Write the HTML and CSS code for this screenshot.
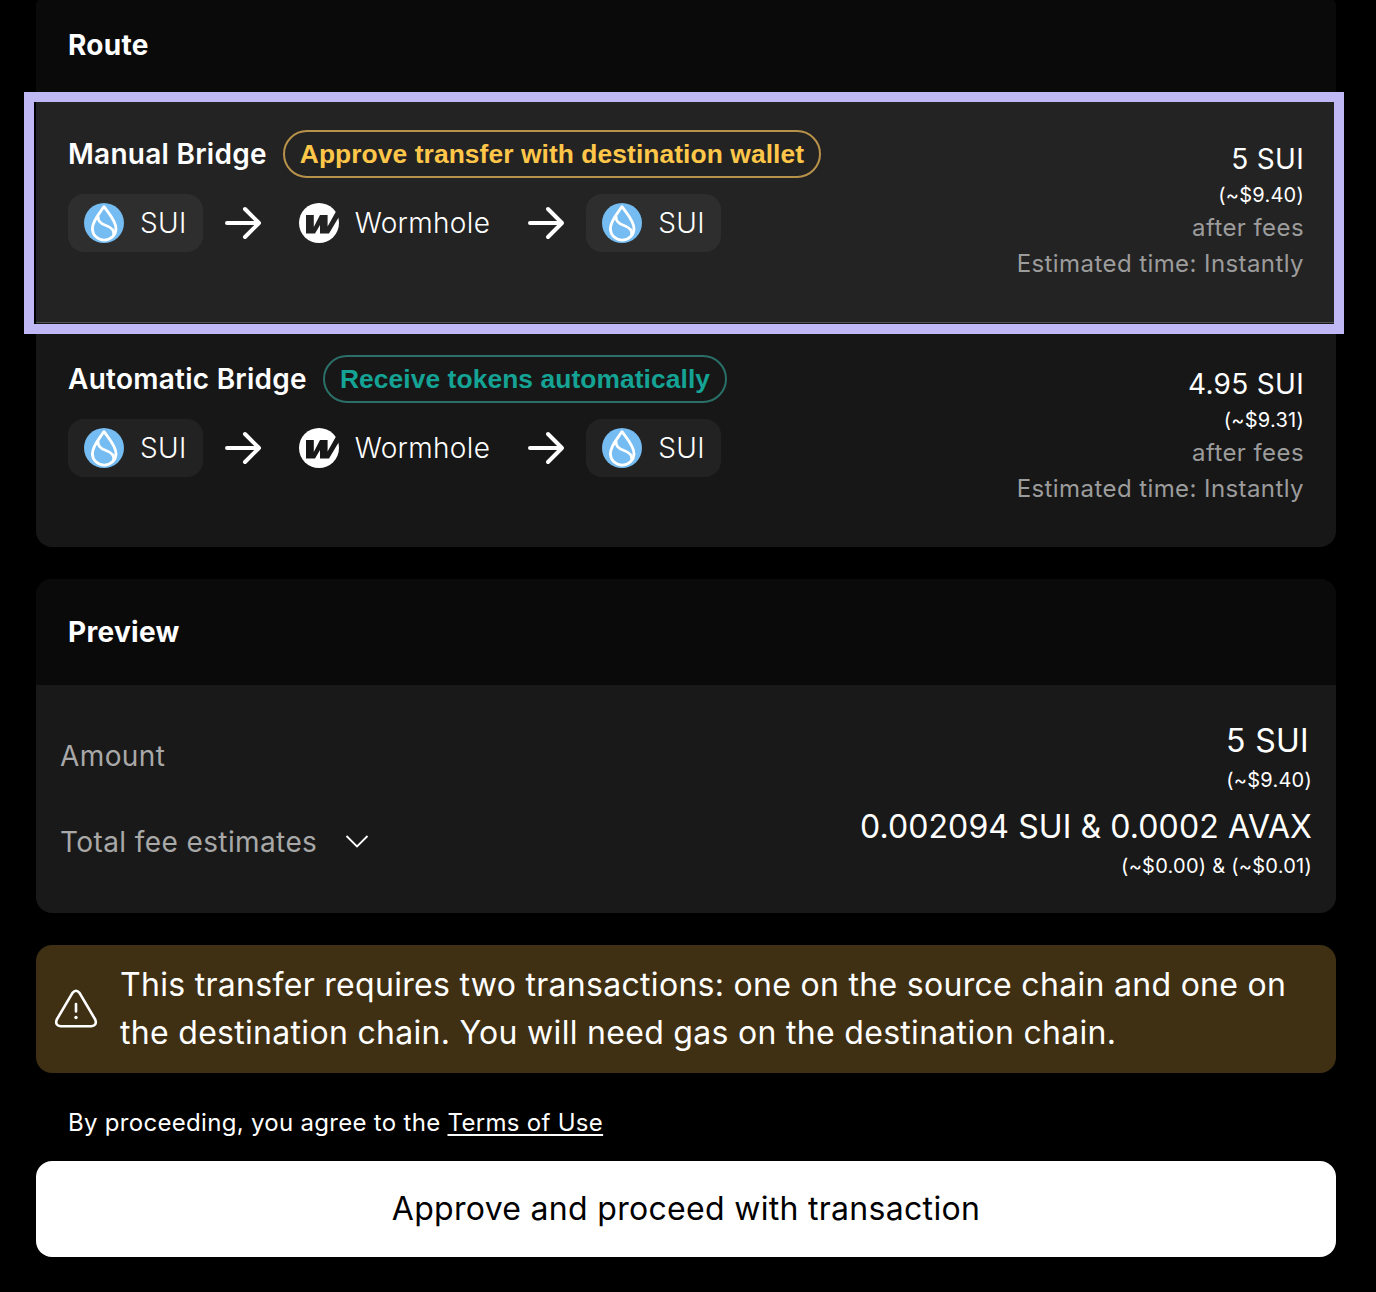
FILE: index.html
```html
<!DOCTYPE html>
<html lang="en">
<head>
<meta charset="utf-8">
<title>Bridge</title>
<link rel="stylesheet" href="styles.css">
</head>
<body>
<svg class="defs" aria-hidden="true">
  <symbol id="sui" viewBox="0 0 40 40">
    <circle cx="20" cy="20" r="20" fill="#74bcf1"/>
    <path d="M20 3.600C16.500 9.200 8.400 17.500 8.400 25.800A11.800 11.300 0 0 0 32 25.800C32 17.500 23.600 9.200 20 3.600Z" fill="none" stroke="#fff" stroke-width="2.800" stroke-linejoin="round"/>
    <path d="M14.300 13.200C13 18.500 17 20.800 22 22.500C27.500 24.500 30.800 27.500 29.600 32" fill="none" stroke="#fff" stroke-width="2.800"/>
  </symbol>
  <symbol id="wormhole" viewBox="0 0 40 40">
    <circle cx="20" cy="20" r="20" fill="#fff"/>
    <path d="M7 12H14.800V24L21 12H28.600V23.500L37 8.500L40.500 13L30 30.600H21V22L16 30.600H7Z" fill="currentColor"/>
  </symbol>
  <symbol id="arrow" viewBox="0 0 48 48">
    <path d="M8 24H40M26 10L40 24L26 38" fill="none" stroke="#fff" stroke-width="4" stroke-linecap="round" stroke-linejoin="round"/>
  </symbol>
</svg>
<main class="page">
  <section class="card card-route">
    <h2 class="card-header">Route</h2>
    <div class="route selected">
      <div class="route-main">
        <div class="route-title"><span class="name">Manual Bridge</span><span class="badge warn">Approve transfer with destination wallet</span></div>
        <div class="path">
          <span class="chip"><svg class="coin"><use href="#sui"/></svg>SUI</span>
          <svg class="arrow"><use href="#arrow"/></svg>
          <span class="chip plain"><svg class="coin"><use href="#wormhole"/></svg>Wormhole</span>
          <svg class="arrow"><use href="#arrow"/></svg>
          <span class="chip"><svg class="coin"><use href="#sui"/></svg>SUI</span>
        </div>
      </div>
      <div class="route-info">
        <span class="receive">5 SUI</span>
        <span class="usd">(~$9.40)</span>
        <span class="note">after fees</span>
        <span class="note">Estimated time: Instantly</span>
      </div>
    </div>
    <div class="route">
      <div class="route-main">
        <div class="route-title"><span class="name">Automatic Bridge</span><span class="badge success">Receive tokens automatically</span></div>
        <div class="path">
          <span class="chip"><svg class="coin"><use href="#sui"/></svg>SUI</span>
          <svg class="arrow"><use href="#arrow"/></svg>
          <span class="chip plain"><svg class="coin"><use href="#wormhole"/></svg>Wormhole</span>
          <svg class="arrow"><use href="#arrow"/></svg>
          <span class="chip"><svg class="coin"><use href="#sui"/></svg>SUI</span>
        </div>
      </div>
      <div class="route-info">
        <span class="receive">4.95 SUI</span>
        <span class="usd">(~$9.31)</span>
        <span class="note">after fees</span>
        <span class="note">Estimated time: Instantly</span>
      </div>
    </div>
  </section>

  <section class="card">
    <h2 class="card-header">Preview</h2>
    <div class="preview">
      <div class="line">
        <span class="label">Amount</span>
        <div class="value"><span class="sum amount">5 SUI</span><span class="usd">(~$9.40)</span></div>
      </div>
      <div class="line">
        <span class="label">Total fee estimates<svg class="chevron" viewBox="0 0 24 14"><path d="M1.500 1L12 11.500L22.500 1" fill="none" stroke="#fff" stroke-width="1.800"/></svg></span>
        <div class="value"><span class="sum">0.002094 SUI &amp; 0.0002 AVAX</span><span class="usd">(~$0.00) &amp; (~$0.01)</span></div>
      </div>
    </div>
  </section>

  <div class="alert">
    <svg class="alert-icon" viewBox="0 0 44 40"><path d="M18.500 3.800Q22 -.4 25.500 3.800L41.200 30.500Q43.400 36.500 37.500 37.200H6.500Q.6 36.500 2.800 30.500Z" fill="none" stroke="#fff" stroke-width="2.600" stroke-linejoin="round"/><path d="M22 15V22.500" stroke="#fff" stroke-width="2.600" stroke-linecap="round"/><circle cx="22" cy="28.500" r="1.700" fill="#fff"/></svg>
    <p class="alert-text">This transfer requires two transactions: one on the source chain and one on<br>the destination chain. You will need gas on the destination chain.</p>
  </div>
  <p class="terms">By proceeding, you agree to the <a class="link" href="#">Terms of Use</a></p>
  <button class="submit">Approve and proceed with transaction</button>
</main>
</body>
</html>
```
FILE: styles.css
```css
*, *::after { box-sizing: border-box; }
body { margin: 0; background: #000; color: #fff; font-family: Inter, sans-serif; letter-spacing: 0.3px; }
.defs { display: none; }
.page { height: 1292px; padding: 0 40px 0 36px; overflow: hidden; display: flex; flex-direction: column; }

.card { flex: none; border-radius: 16px; background: #191919; }
.card-route { margin-top: -8px; margin-bottom: 32px; background: #171717; }
.card-header { margin: 0; height: 106px; padding: 0 32px; display: flex; align-items: center; background: #0a0a0a; border-radius: 16px 16px 0 0; font-size: 28px; font-weight: 700; }

.route { height: 224px; padding: 32px; display: flex; justify-content: space-between; color: #171717; font-size: 28px; }
.selected { position: relative; height: 225px; background: #232323; border-bottom: 1px solid #515151; color: #232323; }
.selected::after { content: ""; position: absolute; top: -6px; left: -12px; right: -8px; height: 242px; border: 10px solid #c0b7f5; }
.route-main { display: flex; flex-direction: column; gap: 16px; }
.route-title { height: 48px; display: flex; align-items: center; gap: 16px; }
.name { color: #fff; font-weight: 600; letter-spacing: 0.26px; }
.badge { height: 48px; padding: 0 15px; display: flex; align-items: center; border: 2px solid; border-radius: 24px; font: 700 26.4px "Liberation Sans", Arial, sans-serif; letter-spacing: 0.07px; }
.warn { color: #ffc749; border-color: #b9924a; }
.success { color: #14a394; border-color: #2a7068; }
.path { display: flex; align-items: center; }
.chip { height: 58px; padding: 0 16px; display: flex; align-items: center; gap: 16px; border-radius: 16px; background: rgba(255, 255, 255, .05); -webkit-text-fill-color: #fff; font-weight: 300; letter-spacing: 0.34px; }
.plain { background: none; }
.coin { width: 40px; height: 40px; }
.arrow { width: 48px; height: 48px; margin: 0 16px; }
.route-info { display: flex; flex-direction: column; align-items: flex-end; padding-top: 8px; color: #fff; }
.receive { line-height: 42px; }
.usd { font-size: 20px; line-height: 30px; letter-spacing: 0.25px; }
.note { font-size: 24px; line-height: 36px; letter-spacing: 0.42px; color: #9c9c9c; }

.preview { height: 228px; padding: 28px 24px; }
.line { height: 86px; display: flex; justify-content: space-between; align-items: center; }
.label { display: flex; align-items: center; gap: 28px; font-size: 28px; letter-spacing: 0.4px; color: #a8a8a8; }
.chevron { width: 24px; height: 14px; }
.value { display: flex; flex-direction: column; align-items: flex-end; }
.sum { font-size: 32px; line-height: 48px; letter-spacing: 0.1px; }
.amount { padding-right: 3px; letter-spacing: 0.3px; }

.alert { flex: none; margin-top: 32px; height: 128px; padding: 0 18px; display: flex; align-items: center; gap: 22px; border-radius: 16px; background: #3f3014; }
.alert-icon { width: 44px; height: 40px; }
.alert-text { margin: 0; font-size: 32px; line-height: 48px; white-space: nowrap; }
.terms { margin: 32px 0 20px 32px; font-size: 24px; line-height: 36px; }
.link { color: inherit; text-underline-offset: 3px; }
.submit { height: 96px; padding: 0 0 2px; border: 0; border-radius: 16px; background: #fff; color: #000; font: 400 32px Inter, sans-serif; letter-spacing: inherit; }
```
